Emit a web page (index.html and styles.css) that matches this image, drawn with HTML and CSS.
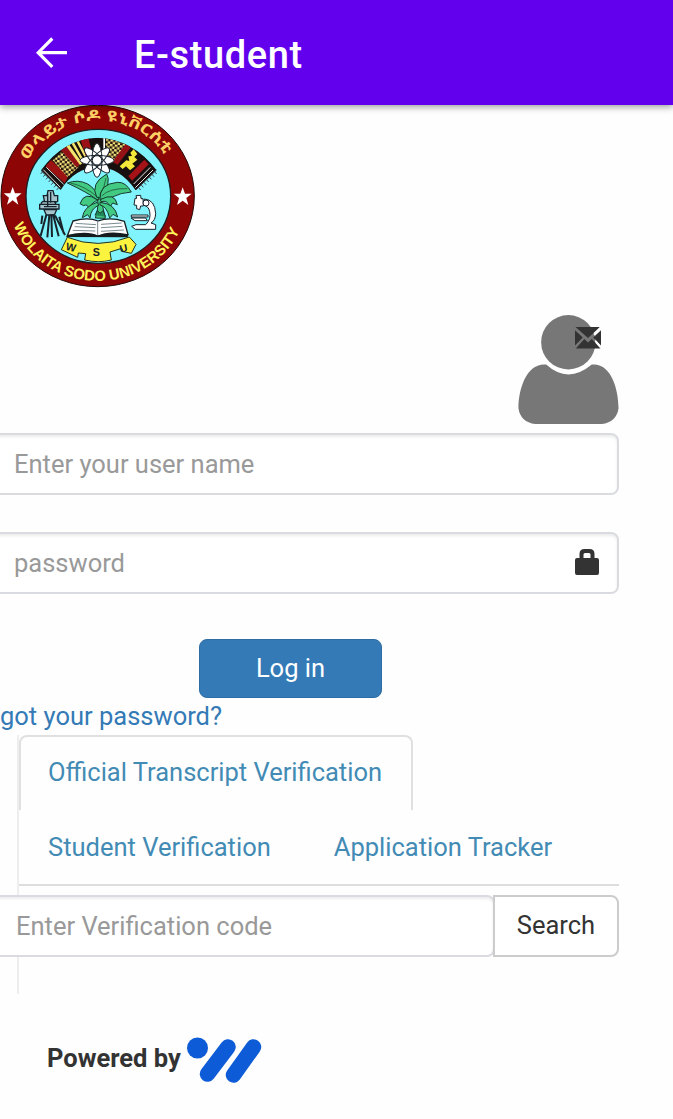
FILE: index.html
```html
<!DOCTYPE html>
<html lang="en">
<head>
<meta charset="utf-8">
<title>E-student</title>
<link rel="stylesheet" href="styles.css">
</head>
<body>
<header class="appbar">
  <svg class="back" viewBox="0 0 32 32"><path d="M31 15.700H3M16.300 1.500L2.200 15.700L16.300 29.800" fill="none" stroke="#fff" stroke-width="3.200"/></svg>
  <h1 class="title">E-student</h1>
</header>
<main class="page">
  <svg class="seal" viewBox="0 15 600 555">
    <defs>
      <path id="arcTop" d="M83 184A236 218 0 0 1 507 184"/>
      <path id="arcBottom" d="M39 370A268 252 0 0 0 548 370"/>
      <path id="star" d="M0-27L7-8L27-8L11 5L17 26L0 13L-17 26L-11 5L-27-8L-7-8Z"/>
      <clipPath id="fan"><path d="M123 211Q191 116 293 113Q398 116 470 211L407 271Q361 203 295 201Q224 203 182 270Z"/></clipPath>
      <pattern id="weave" width="15" height="14" patternUnits="userSpaceOnUse" patternTransform="rotate(8)"><rect width="15" height="14" fill="#21100b"/><path d="M0 0h8v7H0zM8 7h7v7H8z" fill="#f3e37b"/></pattern>
    </defs>
    <ellipse cx="293" cy="288" rx="290" ry="272" fill="#8d0505" stroke="#230808" stroke-width="3"/>
    <ellipse cx="295" cy="289" rx="217" ry="201" fill="#80f3fc" stroke="#1c2024" stroke-width="4"/>
    <text class="seal-am"><textPath href="#arcTop" startOffset="2" textLength="488" lengthAdjust="spacingAndGlyphs">ወላይታ ሶዶ ዩኒቨርሲቲ</textPath></text>
    <text class="seal-en"><textPath href="#arcBottom" startOffset="6" textLength="626" lengthAdjust="spacingAndGlyphs">WOLAITA SODO UNIVERSITY</textPath></text>
    <use href="#star" x="38" y="288" fill="#fff"/>
    <use href="#star" x="548" y="289" fill="#fff"/>
    <g clip-path="url(#fan)">
      <path d="M110 100h370v180H110z" fill="#17100f"/>
      <path d="M137 199L194 250L205 229L153 180Z" fill="#9c1112"/>
      <path d="M158 181L190 150L238 199L203 232Z" fill="url(#weave)"/>
      <path d="M183 151L198 139L243 190L230 202Z" fill="#941216"/>
      <path d="M199 139L208 134L247 190L240 195ZM214 130L221 126L257 190L250 192ZM228 123L235 120L268 184L262 187Z" fill="#f3e36c"/>
      <path d="M241 118L265 113L285 195L266 196Z" fill="#9a1116"/>
      <path d="M310 112h5v90h-5z" fill="#fff"/>
      <path d="M319 112L382 136L350 184L312 195Z" fill="url(#weave)"/>
      <path d="M377 132L393 142L353 194L337 186Z" fill="#941216"/>
      <path d="M401 148L412 162L403 171L412 179L397 191L405 199L390 211L378 199L368 207L359 199L379 181L388 183L385 169L396 168L391 158Z" fill="#f3e83a"/>
      <path d="M433 179L446 193L396 242L385 228Z" fill="#a51217"/>
      <path d="M451 202L401 252M459 210L406 263M139 202L191 253M130 209L181 262" stroke="#e4e8e7" stroke-width="3"/>
    </g>
    <path d="M124 213L181 267M128 215l-6 7m14 1l-6 7m14 1l-6 7m14 1l-6 7m14 1l-6 7m14 1l-6 7m14 1l-6 7M469 210L409 269M464 215l6 7m-14 1l6 7m-14 1l6 7m-14 1l6 7m-14 1l6 7m-14 1l6 7m-14 1l6 7" stroke="#3b4148" stroke-width="3" fill="none"/>
    <g fill="#fff">
      <ellipse cx="291" cy="181" rx="15" ry="51"/>
      <ellipse cx="291" cy="181" rx="15" ry="51" transform="rotate(45 291 181)"/>
      <ellipse cx="291" cy="181" rx="15" ry="51" transform="rotate(90 291 181)"/>
      <ellipse cx="291" cy="181" rx="15" ry="51" transform="rotate(135 291 181)"/>
    </g>
    <g fill="none" stroke="#17222b" stroke-width="3">
      <ellipse cx="291" cy="181" rx="15" ry="51"/>
      <ellipse cx="291" cy="181" rx="15" ry="51" transform="rotate(45 291 181)"/>
      <ellipse cx="291" cy="181" rx="15" ry="51" transform="rotate(90 291 181)"/>
      <ellipse cx="291" cy="181" rx="15" ry="51" transform="rotate(135 291 181)"/>
      <circle cx="291" cy="181" r="14" fill="#fff"/>
    </g>
    <g fill="#42c982" stroke="#15392b" stroke-width="3">
      <path d="M286 354Q300 315 289 279L301 280Q308 322 316 355Z"/>
      <path d="M291 299Q264 278 202 249Q234 237 263 252Q288 266 297 299Z"/>
      <path d="M290 292Q270 250 320 222Q335 247 304 292Z"/>
      <path d="M300 298Q297 252 352 247Q377 245 394 276Q362 278 337 291Q320 295 300 298Z"/>
      <path d="M294 301Q254 271 240 311L251 317Q262 311 267 325Q276 305 294 301Z"/>
      <path d="M291 307Q251 320 247 353L263 344L270 354Q272 326 297 315Z"/>
      <path d="M301 299Q344 275 352 314L338 309L330 321Q323 299 303 305Z"/>
      <path d="M300 307Q345 310 353 351L339 343L329 354Q320 318 300 315Z"/>
      <path d="M285 346l7-15l8 9l9-8l8 18" fill="#218758"/>
      <path d="M211 249Q255 258 291 290M299 286Q315 260 318 234M305 288Q328 264 382 266" fill="none" stroke-width="2"/>
    </g>
    <path d="M219 363Q264 350 294 363Q329 350 373 364L384 404L201 410Z" fill="#fff" stroke="#171f22" stroke-width="4"/>
    <path d="M201 405Q264 391 294 407Q326 391 385 403L383 412L201 411Z" fill="#151c1e"/>
    <path d="M293 363v43M227 370l61 4M224 380l62 3M218 391l68 2M303 373l62-4M303 383l65-4M303 394l69-4" stroke="#7b8b91" stroke-width="3"/>
    <path d="M202 412Q294 449 388 411L408 433L394 460L370 455L365 445L330 456L334 480Q295 490 254 480L257 461L235 459L233 472L184 449Z" fill="#fbf33e" stroke="#24311f" stroke-width="3"/>
    <g class="seal-wsu"><text x="213" y="453" transform="rotate(13 213 443)" text-anchor="middle">W</text><text x="289" y="468" text-anchor="middle">S</text><text x="371" y="456" transform="rotate(-12 371 446)" text-anchor="middle">U</text></g>
    <g fill="#a5c3cc" stroke="#17222b" stroke-width="4">
      <path d="M144 272h15l4 15h10v17l-8 4l8 16H119l6-17l8-5l-3-15h11z"/>
      <path d="M119 313h58v14h-58zM132 329h38l-7 16h-24z"/>
      <path d="M139 345l-17 62m26-62l-6 67m12-69l2 68m3-68l17 66m-11-63l30 59M127 347l-3 25M178 350l13 50" fill="none" stroke-width="6"/>
      <path d="M143 281v38m9-43v32m-22-3h38M132 320h38" fill="none"/>
    </g>
    <g fill="#fff" stroke="#17222b" stroke-width="3">
      <path d="M408 287l14-1l1 10h6l1 22h-8l-3 11l-9-3v-10l-8-1l3-20h5z"/>
      <path d="M433 297q32 2 34 44q-1 21-14 28l14 5v14h-61l-11-9l13-5h29q17-16 12-39q-3-17-18-19z"/>
      <circle cx="438" cy="309" r="9"/><path d="M394 345h50v6h-50zM393 354h44l5 8h-37z"/>
    </g>
  </svg>

  <form class="login">
    <div class="avatar">
      <svg viewBox="0 0 101 111"><circle cx="50.300" cy="27.500" r="27.400" fill="#777"/><path d="M28 50Q50 70 74 50C94 48 101 76 101 94Q99 108 84 110H17Q2 108 0 94C0 75 8 48 28 50Z" fill="#777"/></svg>
      <svg class="mail" viewBox="0 0 26 22"><path d="M.5 0H25L13 11ZM0 3.200L7.800 10.500L0 18.500ZM26 3.200V18.500L18.200 10.500ZM9.300 12L13 15.500L16.800 12L25.500 21.500H.8Z" fill="#333"/><path d="M25.500.5L19 7.500M20.500 14L25.500 20" stroke="#fff" stroke-width="1.500"/></svg>
    </div>
    <div class="field user">Enter your user name</div>
    <div class="field pass"><span>password</span><svg class="lock" viewBox="0 0 24 26"><path d="M2 9H4.500V5Q4.500 0 9.500 0H14.500Q19.500 0 19.500 5V9H22Q24 9 24 11V24Q24 26 22 26H2Q0 26 0 24V11Q0 9 2 9ZM8.500 9H15.500V5.500Q15.500 4 14 4H10Q8.500 4 8.500 5.500Z" fill="#333" fill-rule="evenodd"/></svg></div>
    <button class="login-btn" type="button">Log in</button>
    <a class="forgot">got your password?</a>
  </form>

  <section class="verify">
    <nav class="tabs">
      <a class="tab active">Official Transcript Verification</a>
      <div class="tab-row"><a class="tab">Student Verification</a><a class="tab">Application Tracker</a></div>
    </nav>
    <div class="search">
      <div class="field code">Enter Verification code</div>
      <button class="search-btn" type="button">Search</button>
    </div>
  </section>

  <footer class="powered">
    <strong>Powered by</strong>
    <svg viewBox="0 0 75 47"><circle cx="10.500" cy="11" r="10.500" fill="#0d5bd7"/><path d="M41 10L20.500 37M66.500 10L46.500 38" stroke="#0d5bd7" stroke-width="15.500" stroke-linecap="round"/></svg>
  </footer>
</main>
</body>
</html>
```
FILE: styles.css
```css
* { box-sizing: border-box; }
body {
  margin: 0;
  width: 673px;
  height: 1119px;
  overflow: hidden;
  background: #fefefe;
  color: #333;
  font: 25.5px/36px Roboto, sans-serif;
}
.appbar {
  position: relative;
  display: flex;
  align-items: center;
  height: 105px;
  padding-left: 36px;
  background: #6200ee;
  color: #fff;
  box-shadow: 0 2px 7px rgba(0, 0, 0, .38);
}
.back { width: 32px; height: 32px; }
.title { margin: 4px 0 0 66px; font-size: 38px; font-weight: 500; line-height: 50px; letter-spacing: .6px; }
.page { display: flex; flex-direction: column; }
.seal { display: block; width: 200px; height: 185px; }
.seal-am { font: bold 45px "Noto Sans Ethiopic", "Noto Sans", sans-serif; fill: #ffd065; }
.seal-en { font: bold 45px "Liberation Sans", sans-serif; fill: #fff35b; }
.seal-wsu { font: bold 32px "Liberation Sans", sans-serif; fill: #17222b; }
.login { display: flex; flex-direction: column; width: 619px; padding-top: 25px; }
.avatar { position: relative; align-self: flex-end; width: 101px; height: 110px; }
.avatar svg { display: block; width: 101px; height: 110px; }
.avatar .mail { position: absolute; left: 57px; top: 12px; width: 26px; height: 22px; }
.field {
  display: flex;
  align-items: center;
  height: 62px;
  margin-left: -8px;
  padding: 0 20px 0 22px;
  border: 2px solid #d9dbe0;
  border-left: 0;
  border-radius: 0 8px 8px 0;
  box-shadow: inset 0 2px 3px rgba(0, 0, 0, .08);
  background: #fff;
  color: #999;
}
.user { margin-top: 8px; }
.pass { justify-content: space-between; margin-top: 37px; padding-right: 18px; }
.lock { width: 24px; height: 26px; margin-top: -2px; }
.login-btn {
  width: 183px;
  height: 59px;
  margin: 45px 0 0 199px;
  padding: 0 0 2px;
  border: 1px solid #2e6da4;
  border-radius: 8px;
  background: #337ab7;
  color: #fff;
  font: inherit;
}
.forgot { height: 37px; color: #337ab7; }
.verify { width: 602px; height: 259px; margin-left: 17px; border-left: 2px solid #eee; }
.tabs { display: flex; flex-direction: column; height: 151px; border-bottom: 2px solid #ddd; color: #428bb5; }
.tab { padding: 0 30px 0 29px; line-height: 74px; white-space: nowrap; }
.active { width: 394px; height: 75px; padding-left: 27px; border: 2px solid #e0e0e0; border-bottom: 0; border-radius: 8px 8px 0 0; line-height: 70px; }
.tab-row { display: flex; gap: 4px; }
.search { display: flex; width: 619px; margin: 9px 0 0 -19px; }
.code { width: 503px; padding-left: 24px; }
.search-btn {
  width: 126px;
  height: 62px;
  margin-left: -2px;
  padding: 0 0 2px;
  border: 2px solid #ccc;
  border-radius: 0 8px 8px 0;
  background: #fff;
  color: #333;
  font: inherit;
}
.powered { display: flex; align-items: center; gap: 6px; height: 47px; margin: 43px 0 0 47px; }
.powered strong { padding-bottom: 5px; font-weight: 700; }
.powered svg { width: 75px; height: 47px; }
```
